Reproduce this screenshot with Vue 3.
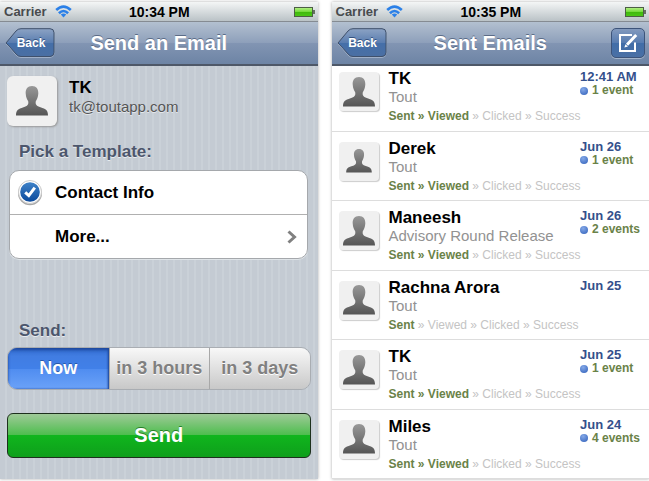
<script setup>
import { ref } from 'vue'

const template = ref(true)
const when = ref('Now')
const times = ['Now', 'in 3 hours', 'in 3 days']
const stages = ['Sent', 'Viewed', 'Clicked', 'Success']
const emails = [
  { name: 'TK', subject: 'Tout', date: '12:41 AM', events: '1 event', reached: 2 },
  { name: 'Derek', subject: 'Tout', date: 'Jun 26', events: '1 event', reached: 2, small: true },
  { name: 'Maneesh', subject: 'Advisory Round Release', date: 'Jun 26', events: '2 events', reached: 2 },
  { name: 'Rachna Arora', subject: 'Tout', date: 'Jun 25', events: '', reached: 1 },
  { name: 'TK', subject: 'Tout', date: 'Jun 25', events: '1 event', reached: 2 },
  { name: 'Miles', subject: 'Tout', date: 'Jun 24', events: '4 events', reached: 2 },
]
const phones = [
  { title: 'Send an Email', time: '10:34 PM', compose: false },
  { title: 'Sent Emails', time: '10:35 PM', compose: true },
]
</script>

<template>
  <main class="stage">
    <svg class="defs" aria-hidden="true">
      <defs>
        <linearGradient id="person" x1="0" y1="0" x2="0" y2="1">
          <stop offset="0" stop-color="#989898" />
          <stop offset="1" stop-color="#555" />
        </linearGradient>
        <linearGradient id="back" x1="0" y1="0" x2="0" y2="1">
          <stop offset="0" stop-color="#8ca3c4" />
          <stop offset=".5" stop-color="#5a7db0" />
          <stop offset=".5" stop-color="#456fa9" />
          <stop offset="1" stop-color="#4a6fa3" />
        </linearGradient>
        <linearGradient id="battery" x1="0" y1="0" x2="0" y2="1">
          <stop offset="0" stop-color="#b8f08a" />
          <stop offset=".5" stop-color="#6fdb35" />
          <stop offset=".5" stop-color="#3fb80c" />
          <stop offset="1" stop-color="#4cc818" />
        </linearGradient>
        <linearGradient id="tick" x1="0" y1="0" x2="0" y2="1">
          <stop offset="0" stop-color="#3f82c8" />
          <stop offset="1" stop-color="#0b4a9c" />
        </linearGradient>
        <symbol id="bust" viewBox="0 0 32 30">
          <path d="M16 0C11.6 0 9.4 3 9.7 7.5C9.9 11 11 13.5 12.2 15.2C12.8 18.6 11.5 20 7.5 21.3C2 23 0 24.5 0 29.5H32C32 24.5 30 23 24.5 21.3C20.5 20 19.2 18.6 19.8 15.2C21 13.5 22.1 11 22.3 7.5C22.6 3 20.4 0 16 0Z" fill="url(#person)" />
        </symbol>
      </defs>
    </svg>
    <section v-for="(phone, i) in phones" :key="phone.title" class="phone">
      <div class="status">
        <div class="carrier">
          <span>Carrier</span>
          <svg width="17" height="13" viewBox="0 0 17 13" fill="none" stroke="#2b80e8" stroke-width="2.6">
            <path d="M1.2 5Q8.5-1.9 15.8 5" />
            <path d="M3.9 8.2Q8.5 3.8 13.1 8.2" />
            <path d="M5.8 9.6Q8.5 7.4 11.2 9.6L8.5 12.4Z" fill="#2b80e8" stroke="none" />
          </svg>
        </div>
        <span class="time">{{ phone.time }}</span>
        <svg class="battery" width="21" height="10" viewBox="0 0 21 10">
          <rect x=".5" y=".5" width="18" height="9" fill="url(#battery)" stroke="#4c5f45" />
          <path d="M19 3h2v4h-2z" fill="#667060" />
        </svg>
      </div>
      <header class="nav">
        <button class="back">
          <svg width="50" height="30" viewBox="0 0 50 30" aria-hidden="true">
            <path d="M1 15Q6 9 11 3Q13 .7 16 .7H45Q49 .7 49 4.7V24.5Q49 28.5 45 28.5H16Q13 28.5 11 26Q6 20 1 15Z" transform="translate(0 .9)" fill="none" stroke="#a5b5cb" />
            <path d="M1 15Q6 9 11 3Q13 .7 16 .7H45Q49 .7 49 4.7V24.5Q49 28.5 45 28.5H16Q13 28.5 11 26Q6 20 1 15Z" fill="url(#back)" stroke="#3f506b" />
          </svg>
          <span>Back</span>
        </button>
        <h1>{{ phone.title }}</h1>
        <button v-if="phone.compose" class="compose" aria-label="Compose">
          <svg width="22" height="20" viewBox="0 0 22 20" fill="none" stroke="#fff" stroke-width="2">
            <path d="M15 2H3V18H18V9.5" />
            <path d="M10 11.8L19.2 2" stroke-width="3" />
            <path d="M8.4 11.2L7.4 14.6L11 13.4Z" fill="#fff" stroke="none" />
          </svg>
        </button>
      </header>

      <form v-if="i === 0" class="compose-form" @submit.prevent>
        <div class="contact">
          <div class="avatar large">
            <svg width="32" height="30"><use href="#bust" /></svg>
          </div>
          <div>
            <div class="name">TK</div>
            <div class="address">tk@toutapp.com</div>
          </div>
        </div>
        <h2>Pick a Template:</h2>
        <div class="group">
          <label class="choice">
            <input v-model="template" type="checkbox" class="hidden-input">
            <svg width="26" height="26" viewBox="0 0 26 26" aria-hidden="true">
              <circle cx="13" cy="13.2" r="12" fill="#a8a8a8" />
              <circle cx="13" cy="12" r="11.5" fill="#fff" stroke="#ccc" />
              <circle cx="13" cy="12" r="9.8" fill="url(#tick)" />
              <path v-if="template" d="M8.2 12.3L11.8 15.6L17.8 7.6" fill="none" stroke="#fff" stroke-width="3" />
            </svg>
            <span>Contact Info</span>
          </label>
          <button type="button" class="choice more">
            <span>More...</span>
            <svg width="10" height="14" viewBox="0 0 10 14" fill="none" stroke="#808080" stroke-width="3">
              <path d="M1.5 1.5L7.5 7L1.5 12.5" />
            </svg>
          </button>
        </div>
        <h2 class="send-label">Send:</h2>
        <div class="segments">
          <button v-for="t in times" :key="t" type="button" :class="{ active: when === t }" @click="when = t">{{ t }}</button>
        </div>
        <button class="submit">Send</button>
      </form>

      <ul v-else class="list">
        <li v-for="mail in emails" :key="mail.name + mail.date">
          <div class="avatar">
            <svg :class="{ small: mail.small }" width="32" height="30"><use href="#bust" /></svg>
          </div>
          <div class="summary">
            <div class="name">{{ mail.name }}</div>
            <div class="subject">{{ mail.subject }}</div>
            <div class="progress">
              <template v-for="(stage, n) in stages" :key="stage"><span :class="{ done: n < mail.reached }">{{ n ? ' » ' : '' }}{{ stage }}</span></template>
            </div>
          </div>
          <div class="meta">
            <div class="date">{{ mail.date }}</div>
            <div v-if="mail.events" class="events"><i class="dot"></i>{{ mail.events }}</div>
          </div>
        </li>
      </ul>
    </section>
  </main>
</template>

<style>
body { background: #fff; }
</style>

<style scoped>
* { box-sizing: border-box; }
.defs { position: absolute; width: 0; height: 0; }
.stage {
  display: grid;
  grid-template-columns: 1fr 1fr;
  gap: 14px;
  min-height: 100vh;
  padding: 2px 0;
  font-family: "Liberation Sans", Arial, sans-serif;
}
.phone {
  display: flex;
  flex-direction: column;
  min-width: 0;
  box-shadow: 0 0 3px #aaa;
}
button { font-family: inherit; padding: 0; margin: 0; border: 0; }
.status {
  display: grid;
  grid-template-columns: 1fr auto 1fr;
  align-items: center;
  height: 20px;
  padding: 0 3px 0 4px;
  background: linear-gradient(#f4f6f6, #bac2c6);
  border-bottom: 1px solid #858b92;
}
.carrier { display: flex; align-items: center; gap: 8px; font-size: 13px; font-weight: bold; color: #484b4e; }
.time { font-size: 14px; font-weight: bold; }
.battery { justify-self: end; }
.nav {
  position: relative;
  display: flex;
  align-items: center;
  justify-content: space-between;
  height: 44px;
  padding: 0 4px 0 5px;
  background: linear-gradient(#b3c0d0, #8d9fba 50%, #8295b3 50%, #6d84a5);
  border-bottom: 2px solid #4e5868;
}
.back { position: relative; width: 50px; height: 30px; background: none; color: #fff; font-size: 12px; font-weight: bold; text-shadow: 0 -1px #35527f; }
.back svg { display: block; }
.back span { position: absolute; inset: 0 0 0 2px; line-height: 30px; }
h1 { position: absolute; inset: 0; margin: 0; text-align: center; color: #fff; font-size: 20px; line-height: 42px; text-shadow: 0 -1px #5b6c87; pointer-events: none; }
.compose {
  display: grid;
  place-items: center;
  width: 34px;
  height: 30px;
  border: 1px solid #3d547a;
  border-radius: 5px;
  background: linear-gradient(#8299bd, #567bb0 50%, #416da8 50%, #4a70a5);
  box-shadow: 0 1px #a5b5cb;
}
.compose-form {
  flex: 1;
  display: flex;
  flex-direction: column;
  padding: 10px 7px 21px;
  background: repeating-linear-gradient(90deg, #c4cbd3 0 5px, #cad1d8 5px 7px);
}
.contact { display: flex; gap: 12px; }
.avatar {
  flex: none;
  display: grid;
  place-items: center;
  width: 40px;
  height: 39px;
  border-radius: 4px;
  background: #f0f0f0;
  box-shadow: 1px 1px 1px #ccc;
}
.avatar.large { width: 50px; height: 50px; border-radius: 6px; box-shadow: 1px 1px 2px #999; }
.avatar svg.small { width: 26px; height: 24px; }
.name { font-size: 17px; font-weight: bold; line-height: 20px; color: #000; }
.contact .name { margin-top: 2px; }
.address { font-size: 15px; line-height: 18px; color: #555; text-shadow: 0 1px #e4e8ec; }
h2 { margin: 16px 12px 8px; font-size: 17px; line-height: 20px; color: #4c566c; text-shadow: 0 1px #e8ecf0; }
.group { margin: 0 3px 0 2px; border: 1px solid #a5a8ac; border-radius: 10px; background: #fff; box-shadow: 0 1px #dfe4e8; }
.choice { display: flex; align-items: center; gap: 12px; width: 100%; height: 43px; padding: 0 10px 0 7px; font-size: 17px; font-weight: bold; color: #000; }
.more { justify-content: space-between; height: 44px; padding-left: 45px; border-top: 1px solid #b0b0b0; background: none; }
.hidden-input { position: absolute; opacity: 0; pointer-events: none; }
.send-label { margin-top: auto; margin-bottom: 6px; }
.segments { display: grid; grid-template-columns: 1fr 1fr 1fr; height: 43px; border: 1px solid #a9adb2; border-radius: 10px; overflow: hidden; }
.segments button { font-size: 18px; font-weight: bold; color: #808080; background: linear-gradient(#f8f8f8, #c8c8c8); text-shadow: 0 1px #fff; white-space: nowrap; }
.segments button + button { border-left: 1px solid #a8a8a8; }
.segments .active { color: #fff; text-shadow: 0 -1px #2858a8; background: linear-gradient(#2f69cc, #417de2 20%, #4180e8 50%, #508df0 52%, #6ba2f8); box-shadow: inset 0 2px 3px #1e489c, inset -1px 0 2px #1e489c; }
.submit {
  height: 45px;
  margin-top: 23px;
  border: 1px solid #1d301d;
  border-radius: 6px;
  color: #fff;
  font-size: 20px;
  font-weight: bold;
  text-shadow: 0 -1px #288028;
  background: linear-gradient(#9fca98, #4bbd4c 50%, #10b51d 50%, #0e9f1b);
}
.list { flex: 1; display: flex; flex-direction: column; margin: 0; padding: 0; list-style: none; background: #fff; }
li { flex: 1 1 auto; display: flex; align-items: flex-start; min-height: 69px; padding: 10px 7px 0 7px; border-bottom: 1px solid #ddd; }
li:first-child { min-height: 64px; padding-top: 6px; }
.summary { flex: 1; min-width: 0; margin: -3px 0 0 10px; white-space: nowrap; }
.subject { font-size: 15px; line-height: 16px; color: #929292; }
.progress { margin-top: 4px; font-size: 12px; line-height: 14px; color: #c4c4c4; white-space: pre; }
.progress .done { font-weight: bold; color: #6a8248; }
.meta { flex: none; width: 62px; margin-top: -2px; font-weight: bold; white-space: nowrap; }
.date { font-size: 13px; line-height: 14px; color: #34508c; }
.events { display: flex; align-items: center; gap: 4px; font-size: 12px; line-height: 13px; color: #6a8248; }
.dot { width: 8px; height: 8px; border-radius: 50%; background: radial-gradient(circle at 40% 30%, #85a9e8, #2e5eb8); }
</style>
